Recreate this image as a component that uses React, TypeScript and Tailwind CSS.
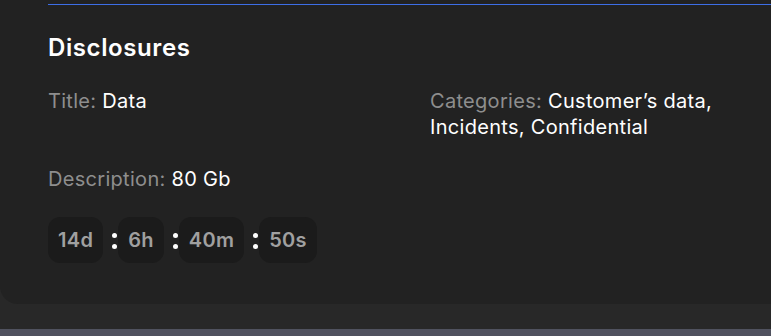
import React from "react";

const font = { fontFamily: '"Inter", "Noto Sans", sans-serif' };

function Box({ children }: { children: React.ReactNode }) {
  return (
    <div className="h-[46px] px-[10px] rounded-[12px] bg-[#1b1b1b] flex items-center text-[20px] font-semibold tracking-[0.3px] text-[#a0a0a0]">
      {children}
    </div>
  );
}

function Colon() {
  return (
    <div className="w-[15px] flex justify-end pr-[1px]">
      <div className="flex flex-col gap-[6px] mt-[1px]">
        <div className="w-[5px] h-[5px] rounded-full bg-white" />
        <div className="w-[5px] h-[5px] rounded-full bg-white" />
      </div>
    </div>
  );
}

export default function App() {
  const times = ["14d", "6h", "40m", "50s"];
  return (
    <div className="w-[771px] h-[336px] bg-[#282828] overflow-hidden flex flex-col" style={font}>
      <div className="h-[304px] bg-[#222222] rounded-bl-[18px] pl-[48px] flex flex-col">
        <div className="h-px mt-[4px] bg-[#3d6ee6]" />
        <h2 className="mt-[27px] text-[24px] font-semibold text-white leading-[32px] tracking-[0.6px]">Disclosures</h2>
        <div className="mt-[24px] grid grid-cols-[382px_1fr] text-[20px] leading-[26px] tracking-[0.3px]">
          <div>
            <span className="text-[#8e8e8e]">Title: </span>
            <span className="text-white">Data</span>
          </div>
          <div className="pr-[20px]">
            <span className="text-[#8e8e8e]">Categories: </span>
            <span className="text-white">Customer’s data, Incidents, Confidential</span>
          </div>
        </div>
        <div className="mt-[26px] text-[20px] leading-[26px] tracking-[0.3px]">
          <span className="text-[#8e8e8e]">Description: </span>
          <span className="text-white">80 Gb</span>
        </div>
        <div className="mt-[25px] flex items-center">
          {times.map((t, i) => (
            <React.Fragment key={t}>
              {i > 0 && <Colon />}
              <Box>{t}</Box>
            </React.Fragment>
          ))}
        </div>
      </div>
      <div className="flex-1" />
      <div className="h-[7px] bg-[#50525f]" />
    </div>
  );
}
